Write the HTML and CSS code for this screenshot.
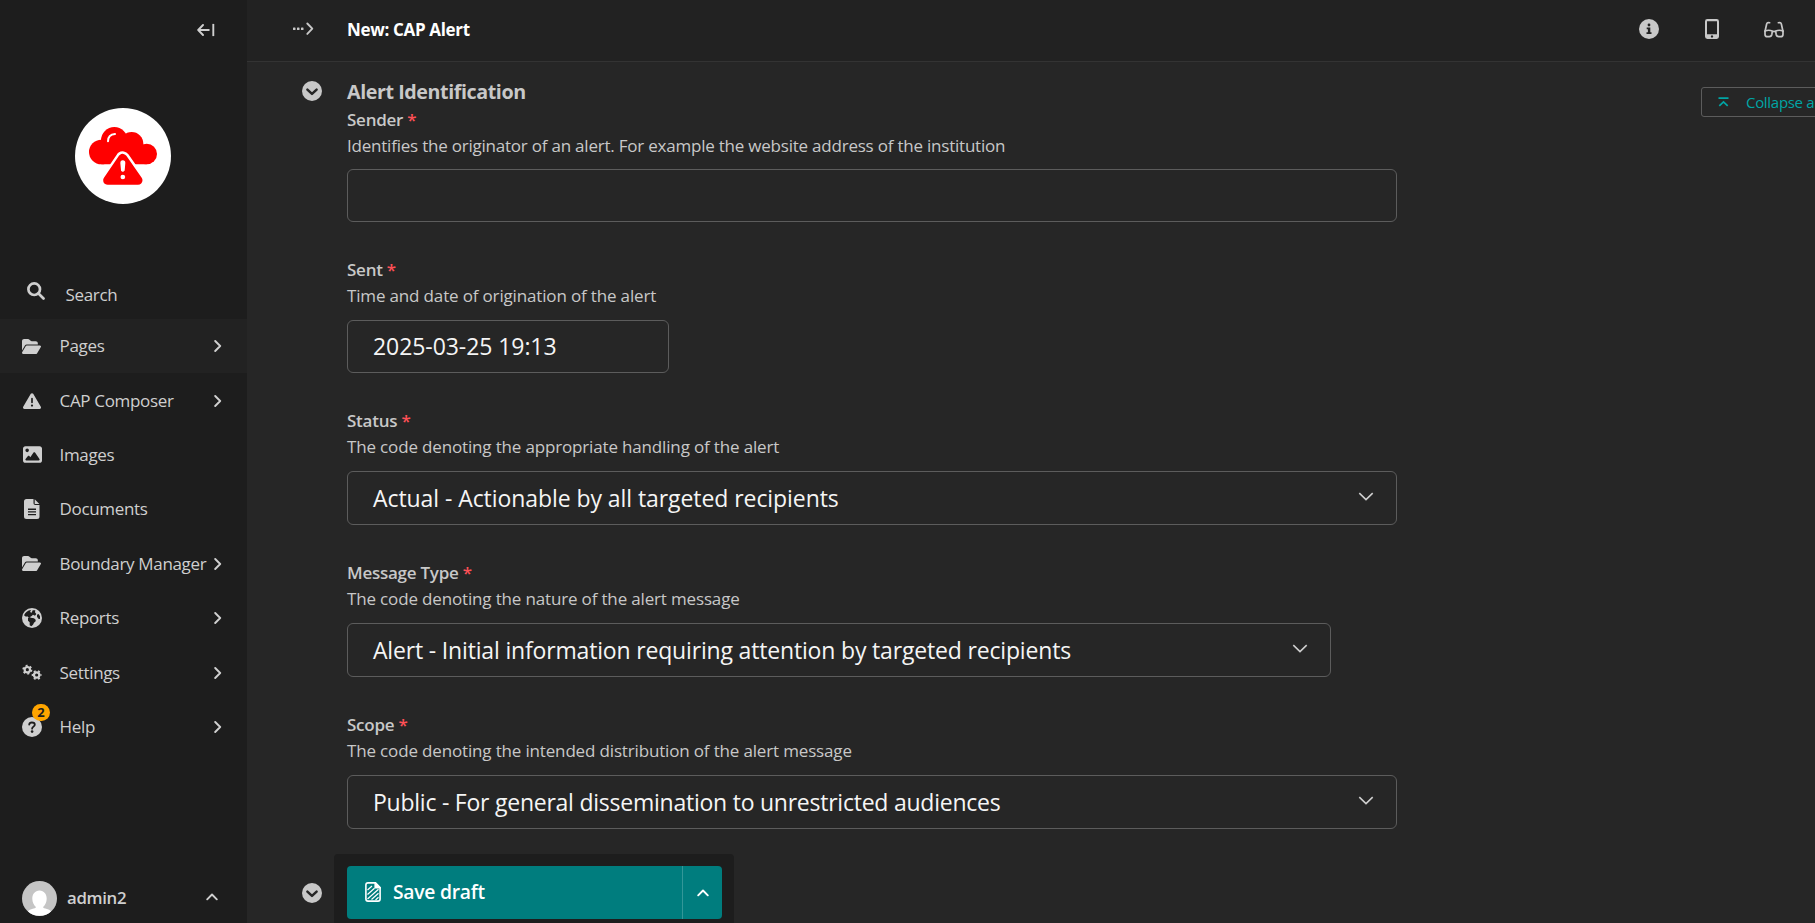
FILE: index.html
```
<!DOCTYPE html>
<html lang="en">
<head>
<meta charset="utf-8">
<title>New: CAP Alert</title>
<link rel="stylesheet" href="styles.css">
</head>
<body>
<svg class="defs" width="0" height="0" aria-hidden="true">
  <symbol id="folder" viewBox="0 0 576 512"><path d="M88.7 223.8L0 375.8V96C0 60.7 28.7 32 64 32H181.5c17 0 33.3 6.7 45.3 18.7l26.5 26.5c12 12 28.3 18.7 45.3 18.7H416c35.3 0 64 28.7 64 64v32H144c-22.8 0-43.8 12.1-55.3 31.8zm27.6 16.1C122.1 230 132.6 224 144 224H544c11.5 0 22 6.1 27.7 16.1s5.7 22.2-.1 32.1l-112 192C453.9 474 443.4 480 432 480H32c-11.5 0-22-6.1-27.7-16.1s-5.7-22.2 .1-32.1l112-192z"/></symbol>
  <symbol id="right" viewBox="0 0 8 12"><path d="M1.2 1l5 5-5 5" fill="none" stroke="currentColor" stroke-width="1.9" stroke-linecap="round" stroke-linejoin="round"/></symbol>
  <symbol id="up" viewBox="0 0 12 8"><path d="M1.2 6.3L6 1.5l4.8 4.8" fill="none" stroke="currentColor" stroke-width="1.9" stroke-linecap="round" stroke-linejoin="round"/></symbol>
  <symbol id="down" viewBox="0 0 16 9"><path d="M1.3 1.2L8 7.6l6.7-6.4" fill="none" stroke="currentColor" stroke-width="1.6"/></symbol>
  <symbol id="toggle" viewBox="0 0 20 20"><circle cx="10" cy="10" r="10"/><path d="M5.4 8.6l4.6 4.3 4.6-4.3" fill="none" stroke="#262626" stroke-width="2.5" stroke-linecap="round" stroke-linejoin="round"/></symbol>
</svg>
<div class="app">
  <aside class="sidebar">
    <div class="sidebar-top">
      <svg width="18" height="14" viewBox="0 0 18 14" fill="none" stroke="currentColor" stroke-width="1.9" stroke-linecap="round" stroke-linejoin="round"><path d="M6 2L1.2 7 6 12M1.5 7h10.3"/><path d="M16.3 .9v12.2" stroke-linecap="butt"/></svg>
    </div>
    <div class="logo">
      <svg width="96" height="96" viewBox="0 0 288 288">
        <g fill="#f00"><circle cx="79" cy="132" r="37"/><circle cx="118" cy="97" r="40"/><circle cx="170" cy="107" r="35"/><circle cx="215" cy="138" r="31"/><path d="M79 110h136v59H79z"/></g>
        <path d="M143 151L98 217h91z" fill="#fff" stroke="#fff" stroke-width="42" stroke-linejoin="round"/>
        <path d="M143 151L98 217h91z" fill="#f00" stroke="#f00" stroke-width="27" stroke-linejoin="round"/>
        <path d="M99 100c0-13 8-21 21-22" fill="none" stroke="#fff" stroke-width="6" stroke-linecap="round"/>
        <path d="M138 165q0-6 5.500-6t5.500 6l-2 22q-3.500 5-7 0z" fill="#fff" stroke="#fff" stroke-width="4"/><circle cx="143.500" cy="207" r="7" fill="#fff"/>
      </svg>
    </div>
    <div class="search">
      <svg width="18" height="18" viewBox="0 0 18 18" fill="none" stroke="currentColor" stroke-width="2.700"><circle cx="7.200" cy="7.200" r="5.800"/><path d="M11.500 11.500l5 5" stroke-linecap="round"/></svg>
      <span>Search</span>
    </div>
    <nav class="nav">
      <a class="item active"><span class="icon"><svg width="19" height="17"><use href="#folder"/></svg></span>Pages<svg class="arrow" width="8" height="12"><use href="#right"/></svg></a>
      <a class="item"><span class="icon"><svg width="18" height="18" viewBox="0 0 512 512"><path d="M256 32c14.2 0 27.3 7.5 34.5 19.8l216 368c7.3 12.4 7.3 27.7 .2 40.1S486.3 480 472 480H40c-14.300 0-27.600-7.700-34.700-20.100s-7-27.800 .2-40.100l216-368C228.700 39.500 241.800 32 256 32zm0 128c-13.300 0-24 10.700-24 24V296c0 13.300 10.700 24 24 24s24-10.700 24-24V184c0-13.300-10.700-24-24-24zm32 224a32 32 0 1 0 -64 0 32 32 0 1 0 64 0z"/></svg></span>CAP Composer<svg class="arrow" width="8" height="12"><use href="#right"/></svg></a>
      <a class="item"><span class="icon"><svg width="19" height="19" viewBox="0 0 512 512"><path d="M0 96C0 60.700 28.700 32 64 32H448c35.300 0 64 28.700 64 64V416c0 35.300-28.700 64-64 64H64c-35.300 0-64-28.700-64-64V96zM323.800 202.500c-4.500-6.600-11.900-10.500-19.800-10.500s-15.400 3.900-19.800 10.500l-87 127.600L170.700 297c-4.600-5.700-11.500-9-18.700-9s-14.200 3.300-18.700 9l-64 80c-5.800 7.200-6.900 17.100-2.900 25.400s12.400 13.600 21.600 13.600h96 32H424c8.900 0 17.100-4.900 21.200-12.800s3.600-17.400-1.400-24.700l-120-176zM112 192a48 48 0 1 0 0-96 48 48 0 1 0 0 96z"/></svg></span>Images</a>
      <a class="item"><span class="icon"><svg width="16" height="20" viewBox="0 0 16 20"><path fill-rule="evenodd" d="M2.500 0H9.500V4.200Q9.500 6 11.300 6H15.500V17.500Q15.500 20 13 20H2.500Q0 20 0 17.500V2.500Q0 0 2.500 0zM4 9.600v1.300h8V9.600zM4 12.300v1.300h8v-1.300zM4 15v1.300h8V15zM10.700 .2L15.400 4.900H10.700z"/></svg></span>Documents</a>
      <a class="item"><span class="icon"><svg width="19" height="17"><use href="#folder"/></svg></span>Boundary Manager<svg class="arrow" width="8" height="12"><use href="#right"/></svg></a>
      <a class="item"><span class="icon"><svg width="20" height="20" viewBox="0 0 60 60"><circle cx="30" cy="30" r="30"/><path fill="#1d1d1d" d="M6 22C10 13 17 7 27 6l-3 6 5 2 3-7 8 0-1 6 4 5-4 5-6-3-4 4-4 2 0 3-5 0-4-4-4 1zM18 30l8-1 10 2 5 4 0 5-5 4-3 6-5 5-5-3 0-9-5-5zM45 20l5-2 4 7 0 8-5-1-4-6z"/></svg></span>Reports<svg class="arrow" width="8" height="12"><use href="#right"/></svg></a>
      <a class="item"><span class="icon"><svg width="20" height="17" viewBox="0 0 60 51" fill="none" stroke="currentColor"><circle cx="16" cy="17" r="8" stroke-width="6.500"/><circle cx="16" cy="17" r="12.500" stroke-width="5" stroke-dasharray="6 7.090"/><circle cx="44" cy="33" r="8" stroke-width="6.500"/><circle cx="44" cy="33" r="12.500" stroke-width="5" stroke-dasharray="6 7.090" stroke-dashoffset="4"/></svg></span>Settings<svg class="arrow" width="8" height="12"><use href="#right"/></svg></a>
      <a class="item"><span class="icon"><svg width="20" height="20" viewBox="0 0 20 20"><circle cx="10" cy="10" r="10"/><path d="M7.200 7.600c.2-1.500 1.200-2.100 2.700-2.100 1.700 0 2.900.8 2.900 2.200 0 1.900-2.700 2-2.700 4" fill="none" stroke="#1d1d1d" stroke-width="1.800" stroke-linecap="round"/><circle cx="10.100" cy="14.600" r="1.300" fill="#1d1d1d"/></svg><b class="badge">2</b></span>Help<svg class="arrow" width="8" height="12"><use href="#right"/></svg></a>
    </nav>
    <div class="user">
      <svg class="avatar" width="35" height="35" viewBox="0 0 35 35"><circle cx="17.500" cy="17.500" r="17.500" fill="#c5c5c5"/><path fill="#fff" d="M17.500 9.500c4.500 0 7.200 3.600 7.200 8.300 0 3.600-1.600 6.600-3.600 8.200 0 1.200 1.500 1.300 3.900 2 2.100.6 3.400 1.500 4 2.400a17.500 17.500 0 0 1-23 0c.6-.9 1.900-1.800 4-2.400 2.400-.7 3.900-.8 3.900-2-2-1.600-3.600-4.600-3.600-8.200 0-4.700 2.700-8.300 7.200-8.300z"/></svg>
      <span>admin2</span>
      <svg class="user-arrow" width="12" height="8"><use href="#up"/></svg>
    </div>
  </aside>
  <main class="main">
    <header class="header">
      <svg class="crumb" width="21" height="14" viewBox="0 0 21 14"><g><rect x="0" y="5.500" width="2.500" height="2.500" rx=".6"/><rect x="4" y="5.500" width="2.500" height="2.500" rx=".6"/><rect x="8" y="5.500" width="2.500" height="2.500" rx=".6"/></g><path d="M14.300 1.500l5 5.200-5 5.200" fill="none" stroke="currentColor" stroke-width="1.900" stroke-linecap="round" stroke-linejoin="round"/></svg>
      <h1>New: CAP Alert</h1>
      <div class="tools">
        <svg width="20" height="20" viewBox="0 0 20 20"><circle cx="10" cy="10" r="10"/><g fill="#222"><circle cx="10" cy="6" r="1.400"/><path d="M7.700 8.600h3.600v4.600h1.200v1.800H7.500v-1.800h1.400v-2.900H7.700z"/></g></svg>
        <svg width="14" height="20" viewBox="0 0 14 20"><path fill-rule="evenodd" d="M2.400 0h9.200Q14 0 14 2.400v15.200Q14 20 11.600 20H2.400Q0 20 0 17.600V2.400Q0 0 2.400 0zM2 2.300v13h10v-13zM7 16.300a1.200 1.200 0 1 0 .01 0z"/></svg>
        <svg width="20" height="17" viewBox="0 0 20 17" fill="none" stroke="currentColor" stroke-width="1.700" stroke-linecap="round"><path d="M1 10.500L2.600 3.200Q3.100 1 5.600 1.700M19 10.500L17.400 3.200Q16.900 1 14.400 1.700"/><path d="M1 10q3.700-1.500 7.300 0l-.4 3.200q-.4 2.500-2.600 2.500H3.300Q1 15.700 1 13.200zM19 10q-3.700-1.500-7.300 0l.4 3.200q.4 2.500 2.600 2.500h2q2.300 0 2.300-2.500zM8.300 10.800q1.700-1 3.400 0"/></svg>
      </div>
    </header>
    <section class="panel">
      <svg class="toggle" width="20" height="20"><use href="#toggle"/></svg>
      <div class="form">
        <h2>Alert Identification</h2>
        <div class="field first"><label>Sender <i>*</i></label><p>Identifies the originator of an alert. For example the website address of the institution</p><div class="box"></div></div>
        <div class="field"><label>Sent <i>*</i></label><p>Time and date of origination of the alert</p><div class="box date">2025-03-25 19:13</div></div>
        <div class="field"><label>Status <i>*</i></label><p>The code denoting the appropriate handling of the alert</p><div class="box select">Actual - Actionable by all targeted recipients<svg width="16" height="9"><use href="#down"/></svg></div></div>
        <div class="field type"><label>Message Type <i>*</i></label><p>The code denoting the nature of the alert message</p><div class="box select narrow">Alert - Initial information requiring attention by targeted recipients<svg width="16" height="9"><use href="#down"/></svg></div></div>
        <div class="field scope"><label>Scope <i>*</i></label><p>The code denoting the intended distribution of the alert message</p><div class="box select">Public - For general dissemination to unrestricted audiences<svg width="16" height="9"><use href="#down"/></svg></div></div>
      </div>
      <button class="collapse"><svg width="11" height="10" viewBox="0 0 11 10" fill="none" stroke="currentColor" stroke-width="1.700"><path d="M.5 1.100h10M1.300 8.800l4.200-4 4.200 4"/></svg>Collapse all</button>
    </section>
    <section class="panel next"><svg class="toggle" width="20" height="20"><use href="#toggle"/></svg></section>
    <footer class="actions">
      <button class="save">
        <svg width="16" height="20" viewBox="0 0 16 20" fill="none" stroke="currentColor" stroke-width="1.600"><path d="M3 .9h7.500l4.600 4.600V17q0 2.100-2.100 2.100H3Q.9 19.100.9 17V3Q.9.9 3 .9z"/><path d="M10.200 1v4.800h4.800z" fill="currentColor"/><path d="M2.500 8l4.500-4M2.500 12.500l7-6.200M2.500 17l11-9.700M6.500 17.500l7-6.200M10.500 18l3-2.700" stroke-width="1.200"/></svg>
        Save draft
      </button>
      <button class="more"><svg width="12" height="8"><use href="#up"/></svg></button>
    </footer>
  </main>
</div>
</body>
</html>
```
FILE: styles.css
```
* { box-sizing: border-box; }
body {
  margin: 0;
  height: 923px;
  overflow: hidden;
  background: #262626;
  color: #c8c8c8;
  font: 400 17px/26px "Open Sans", "Noto Sans", sans-serif;
}
.defs { position: absolute; }
svg { display: block; flex: none; }
svg:not([fill]) { fill: currentColor; }
h1, h2, p { margin: 0; }
button { font: inherit; border: 0; margin: 0; padding: 0; }
.app { display: flex; height: 923px; }

/* Sidebar */
.sidebar {
  width: 247px;
  flex: none;
  display: flex;
  flex-direction: column;
  background: #1d1d1d;
  color: #cfcfcf;
  letter-spacing: -0.33px;
}
.sidebar-top { height: 108px; padding: 23px 32px 0; display: flex; justify-content: flex-end; }
.logo { width: 96px; height: 96px; margin-left: 74.5px; border-radius: 50%; background: #fff; overflow: hidden; }
.search { display: flex; align-items: flex-start; height: 37px; margin-top: 78px; padding-left: 27px; }
.search span { margin-left: 20.5px; }
.nav { display: flex; flex-direction: column; }
.item { display: flex; align-items: center; height: 54.4px; padding: 0 25px 0 22px; white-space: nowrap; }
.item.active { background: #222; }
.icon { position: relative; width: 37.5px; height: 20px; display: flex; align-items: center; flex: none; }
.icon > svg { margin: 0 auto 0 0; }
.item:nth-child(2) .icon > svg, .item:nth-child(3) .icon > svg { margin-left: 1px; }
.item:nth-child(4) .icon > svg { margin-left: 2px; }
.arrow { margin-left: auto; }
.badge {
  position: absolute;
  left: 10px;
  top: -12.5px;
  width: 18px;
  height: 17px;
  border-radius: 9px;
  background: #ffa500;
  color: #1d1d1d;
  font-size: 13px;
  line-height: 17px;
  text-align: center;
  letter-spacing: 0;
}
.user { display: flex; align-items: center; height: 50px; margin-top: auto; padding: 0 29px 0 22px; font-weight: 600; font-size: 16.8px; }
.user span { margin-left: 10px; }
.user-arrow { margin: -2px 0 0 auto; }

/* Header */
.main { flex: 1; min-width: 0; display: flex; flex-direction: column; }
.header {
  display: flex;
  align-items: center;
  height: 62px;
  flex: none;
  padding: 0 31px 3px 46px;
  background: #222;
  border-bottom: 1px solid #333;
}
.header h1 { margin-left: 33px; padding-top: 2px; color: #fff; font-size: 17px; font-weight: 700; letter-spacing: -0.33px; }
.tools { display: flex; align-items: center; gap: 46px; margin-left: auto; }
.tools svg:last-child { margin-left: -1px; }

/* Form */
.panel { display: flex; align-items: flex-start; padding: 16px 0 0 55px; }
.toggle { margin-top: 3px; }
.form { width: 1050px; flex: none; margin-left: 25px; }
.form h2 { padding-top: 1px; margin-bottom: 2px; font-size: 19.7px; line-height: 26px; font-weight: 700; letter-spacing: -0.43px; }
.field { margin-bottom: 35px; }
.field label { display: block; font-weight: 600; letter-spacing: -0.25px; }
.field i { color: #fe5056; font-style: normal; }
.field p { margin-bottom: 11px; letter-spacing: -0.16px; white-space: nowrap; }
.field.first p { margin-bottom: 10px; letter-spacing: -0.22px; }
.box {
  display: flex;
  align-items: center;
  height: 53px;
  padding: 0 22px 1px 25px;
  border: 1px solid #5c5c5c;
  border-radius: 6px;
  color: #f5f5f5;
  font-size: 23px;
  letter-spacing: -0.07px;
  white-space: nowrap;
}
.date { width: 322px; }
.select { height: 54px; padding-bottom: 0; }
.select svg { margin: -4px 0 0 auto; color: #cfcfcf; }
.narrow { width: 984px; }
.type .box { letter-spacing: -0.17px; }
.scope .box { letter-spacing: -0.24px; }
.collapse {
  display: flex;
  align-items: center;
  flex: none;
  width: 134px;
  height: 30px;
  margin: 9px 0 0 304px;
  padding-left: 16px;
  border: 1px solid #5c5c5c;
  border-radius: 3px;
  background: none;
  color: #00a5a5;
  font-size: 15px;
  letter-spacing: -0.3px;
  white-space: nowrap;
}
.collapse svg { margin-right: 17px; }
.next { padding-top: 16px; }

/* Save bar, pinned over the form */
.actions {
  position: fixed;
  left: 334px;
  bottom: 0;
  display: flex;
  width: 400px;
  height: 69px;
  padding: 12px 12px 4px 13px;
  border-radius: 4px 4px 0 0;
  background: #1d1d1d;
}
.save, .more { display: flex; align-items: center; background: #007d7e; color: #fff; }
.save {
  flex: 1;
  gap: 12px;
  padding: 0 0 1px 18px;
  border-radius: 4px 0 0 4px;
  border-right: 1px solid #339798;
  font-size: 19.300px;
  font-weight: 600;
  letter-spacing: -0.24px;
}
.more { width: 39px; justify-content: center; border-radius: 0 4px 4px 0; }
```
